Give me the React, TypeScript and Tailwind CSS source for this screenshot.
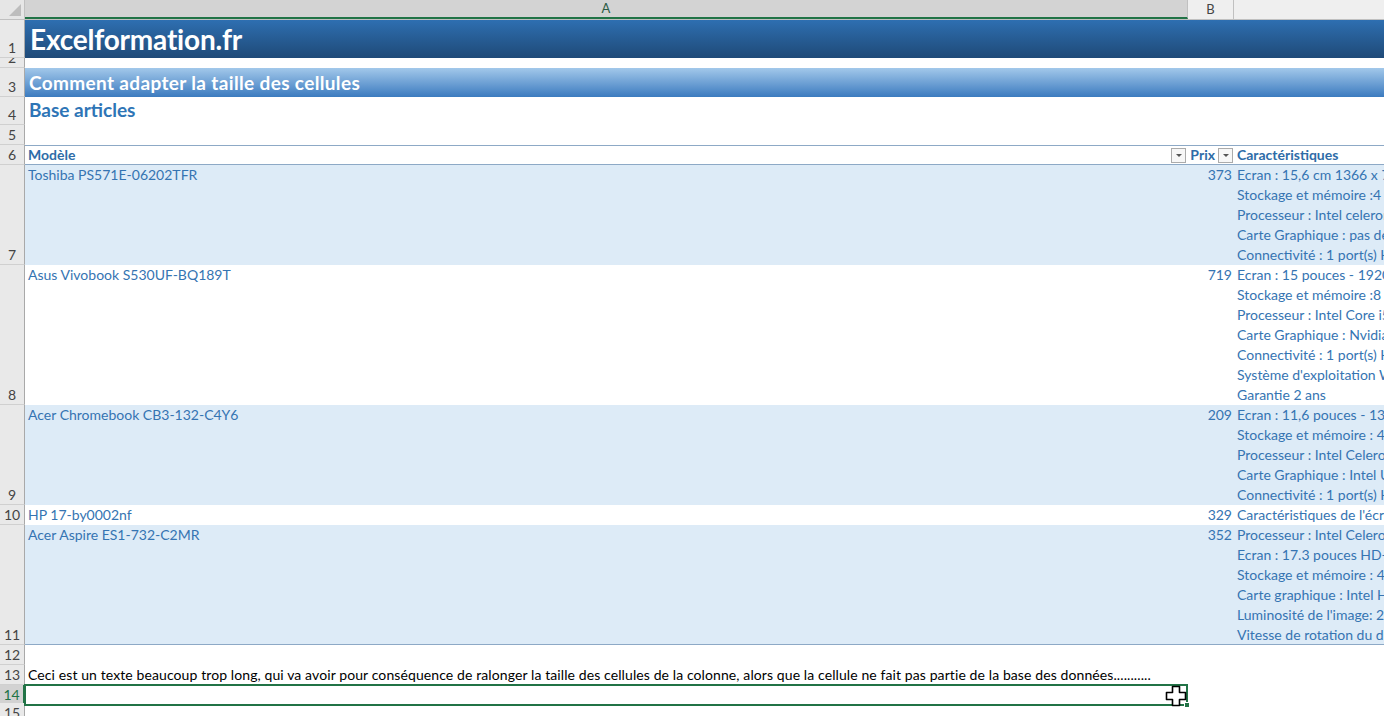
import { Fragment } from "react";

type Article = {
  model: string;
  price: number;
  specs: string[];
  shaded: boolean;
  h: string;
  label: string;
};

const articles: Article[] = [
  {
    model: "Toshiba PS571E-06202TFR",
    price: 373,
    shaded: true,
    h: "h-[100px]",
    label: "7",
    specs: [
      "Ecran : 15,6 cm 1366 x 768 pixels",
      "Stockage et mémoire :4 Go RAM - 500 Go HDD",
      "Processeur : Intel celeron N3060",
      "Carte Graphique : pas de carte dédiée",
      "Connectivité : 1 port(s) HDMI",
    ],
  },
  {
    model: "Asus Vivobook S530UF-BQ189T",
    price: 719,
    shaded: false,
    h: "h-[140px]",
    label: "8",
    specs: [
      "Ecran : 15 pouces - 1920 x 1080",
      "Stockage et mémoire :8 Go RAM",
      "Processeur : Intel Core i5-8250U",
      "Carte Graphique : Nvidia GeForce MX130",
      "Connectivité : 1 port(s) HDMI",
      "Système d'exploitation Windows 10",
      "Garantie 2 ans",
    ],
  },
  {
    model: "Acer Chromebook CB3-132-C4Y6",
    price: 209,
    shaded: true,
    h: "h-[100px]",
    label: "9",
    specs: [
      "Ecran : 11,6 pouces - 1366 x 768",
      "Stockage et mémoire : 4 Go RAM",
      "Processeur : Intel Celeron N3060",
      "Carte Graphique : Intel UHD",
      "Connectivité : 1 port(s) HDMI",
    ],
  },
  {
    model: "HP 17-by0002nf",
    price: 329,
    shaded: false,
    h: "h-[20px]",
    label: "10",
    specs: ["Caractéristiques de l'écran : 17,3 pouces"],
  },
  {
    model: "Acer Aspire ES1-732-C2MR",
    price: 352,
    shaded: true,
    h: "h-[120px]",
    label: "11",
    specs: [
      "Processeur : Intel Celeron N3450",
      "Ecran : 17.3 pouces HD+ 1600 x 900",
      "Stockage et mémoire : 4 Go RAM",
      "Carte graphique : Intel HD Graphics",
      "Luminosité de l'image: 220 nits",
      "Vitesse de rotation du disque : 5400 tr/min",
    ],
  },
];

function RowHead({ label, selected }: { label: string; selected?: boolean }) {
  return (
    <div
      className={
        "w-[25px] shrink-0 h-full flex items-end justify-center overflow-hidden border-b border-[#d0d0d0] text-[14px] leading-[19px] " +
        (selected
          ? "bg-[#d2d2d2] text-[#217346] border-r-2 border-r-[#217346]"
          : "bg-[#e9e9e9] text-[#444] border-r border-r-[#a9a9a9]")
      }
    >
      {label}
    </div>
  );
}

function FilterButton() {
  return (
    <div className="w-[15px] h-[15px] border border-[#ababab] bg-[#f7f7f7] flex items-center justify-center">
      <div className="w-0 h-0 border-l-[3px] border-r-[3px] border-t-[3px] border-l-transparent border-r-transparent border-t-[#555]" />
    </div>
  );
}

function CrossCursor() {
  return (
    <svg width="23" height="23" viewBox="0 0 23 23" className="absolute left-[1165px] top-[685px]">
      <path
        d="M7.5 1.5h7v6h6v7h-6v6h-7v-6h-6v-7h6z"
        fill="#fff"
        stroke="#000"
        strokeWidth="1.6"
        strokeLinejoin="round"
      />
    </svg>
  );
}

export default function App() {
  return (
    <div className="relative w-[1384px] h-[716px] overflow-hidden bg-white font-[Lato,'Liberation_Sans',sans-serif] text-[14px]">
      {/* column letters */}
      <div className="flex h-[20px] border-b border-[#c0c0c0] bg-[#efefef] text-[13px] text-[#444]">
        <div className="w-[25px] shrink-0 relative bg-[#e6e6e6] border-r border-[#c0c0c0]">
          <svg width="12" height="12" viewBox="0 0 12 12" className="absolute right-[3px] bottom-[3px]">
            <path d="M12 0V12H0z" fill="#bdbdbd" />
          </svg>
        </div>
        <div className="w-[1163px] shrink-0 flex items-center justify-center bg-[#d3d3d3] border-b-2 border-[#217346] text-[#2b5c45] border-r border-r-[#c0c0c0]">
          A
        </div>
        <div className="w-[46px] shrink-0 flex items-center justify-center border-r border-[#c0c0c0]">B</div>
        <div className="flex-1" />
      </div>

      {/* row 1 */}
      <div className="flex h-[38px]">
        <RowHead label="1" />
        <div className="flex-1 flex items-center pl-[5px] bg-linear-to-b from-[#2e6fb1] to-[#1f4a78] text-white font-bold text-[28px] tracking-[-0.2px]">
          Excelformation.fr
        </div>
      </div>

      {/* row 2 */}
      <div className="flex h-[10px]">
        <RowHead label="2" />
        <div className="flex-1" />
      </div>

      {/* row 3 */}
      <div className="flex h-[29px]">
        <RowHead label="3" />
        <div className="flex-1 flex items-end pb-[3px] pl-[4px] bg-linear-to-b from-[#a2c8ea] to-[#3b7bbf] text-white font-bold text-[19px] tracking-[0.35px] leading-[22px]">
          Comment adapter la taille des cellules
        </div>
      </div>

      {/* row 4 */}
      <div className="flex h-[28px]">
        <RowHead label="4" />
        <div className="flex-1 pl-[4px] pt-[2px] text-[#2e75b6] font-bold text-[19px] leading-[22px]">Base articles</div>
      </div>

      {/* row 5 */}
      <div className="flex h-[20px]">
        <RowHead label="5" />
        <div className="flex-1" />
      </div>

      {/* row 6 : table header */}
      <div className="flex h-[20px]">
        <RowHead label="6" />
        <div className="flex-1 flex border-y border-[#8da9c6] font-bold text-[#2e6ca8] leading-[18px]">
          <div className="w-[1163px] shrink-0 flex items-center justify-between pl-[3px] pr-[2px]">
            <span>Modèle</span>
            <FilterButton />
          </div>
          <div className="w-[46px] shrink-0 flex items-center justify-end gap-[3px] pr-[1px]">
            <span>Prix</span>
            <FilterButton />
          </div>
          <div className="flex-1 flex items-center pl-[3px] whitespace-nowrap overflow-hidden">Caractéristiques</div>
        </div>
      </div>

      {/* rows 7-11 */}
      {articles.map((a, i) => (
        <div key={a.model} className={"flex " + a.h}>
          <RowHead label={a.label} />
          <div
            className={
              "flex-1 flex text-[#3574b2] leading-[20px] " +
              (a.shaded ? "bg-[#ddebf7] " : "bg-white ") +
              (i === articles.length - 1 ? "border-b border-[#8da9c6]" : "")
            }
          >
            <div className="w-[1163px] shrink-0 pl-[3px]">{a.model}</div>
            <div className="w-[46px] shrink-0 text-right pr-[2px]">{a.price}</div>
            <div className="flex-1 pl-[3px] whitespace-nowrap overflow-hidden">
              {a.specs.map((s) => (
                <Fragment key={s}>
                  <div>{s}</div>
                </Fragment>
              ))}
            </div>
          </div>
        </div>
      ))}

      {/* row 12 */}
      <div className="flex h-[20px]">
        <RowHead label="12" />
        <div className="flex-1" />
      </div>

      {/* row 13 */}
      <div className="flex h-[20px]">
        <RowHead label="13" />
        <div className="flex-1 pl-[3px] leading-[20px] text-black whitespace-nowrap tracking-[0.1px]">
          Ceci est un texte beaucoup trop long, qui va avoir pour conséquence de ralonger la taille des cellules de la colonne, alors que la cellule ne fait pas partie de la base des données...........
        </div>
      </div>

      {/* row 14 : active cell */}
      <div className="flex h-[20px]">
        <RowHead label="14" selected />
        <div className="relative w-[1164px] shrink-0 -ml-[1px] -mt-[1px] h-[22px] border-2 border-[#217346]">
          <div className="absolute -right-[4px] -bottom-[4px] w-[6px] h-[6px] bg-[#217346] border border-white" />
        </div>
      </div>

      {/* row 15 */}
      <div className="flex h-[20px] -mt-[2px]">
        <RowHead label="15" />
        <div className="flex-1" />
      </div>

      <CrossCursor />
    </div>
  );
}
